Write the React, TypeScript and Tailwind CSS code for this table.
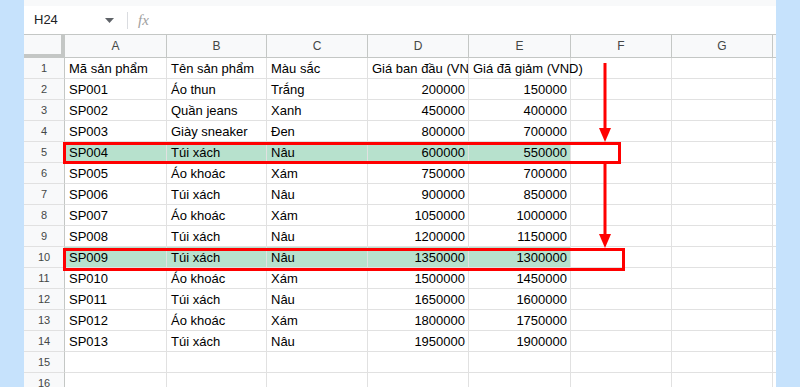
import React from "react";

type Row = { n: number; cells: string[]; hl?: boolean };

const rows: Row[] = [
  { n: 1, cells: ["Mã sản phẩm", "Tên sản phẩm", "Màu sắc", "Giá ban đầu (VND)", "Giá đã giảm (VND)"] },
  { n: 2, cells: ["SP001", "Áo thun", "Trắng", "200000", "150000"] },
  { n: 3, cells: ["SP002", "Quần jeans", "Xanh", "450000", "400000"] },
  { n: 4, cells: ["SP003", "Giày sneaker", "Đen", "800000", "700000"] },
  { n: 5, cells: ["SP004", "Túi xách", "Nâu", "600000", "550000"], hl: true },
  { n: 6, cells: ["SP005", "Áo khoác", "Xám", "750000", "700000"] },
  { n: 7, cells: ["SP006", "Túi xách", "Nâu", "900000", "850000"] },
  { n: 8, cells: ["SP007", "Áo khoác", "Xám", "1050000", "1000000"] },
  { n: 9, cells: ["SP008", "Túi xách", "Nâu", "1200000", "1150000"] },
  { n: 10, cells: ["SP009", "Túi xách", "Nâu", "1350000", "1300000"], hl: true },
  { n: 11, cells: ["SP010", "Áo khoác", "Xám", "1500000", "1450000"] },
  { n: 12, cells: ["SP011", "Túi xách", "Nâu", "1650000", "1600000"] },
  { n: 13, cells: ["SP012", "Áo khoác", "Xám", "1800000", "1750000"] },
  { n: 14, cells: ["SP013", "Túi xách", "Nâu", "1950000", "1900000"] },
  { n: 15, cells: [] },
  { n: 16, cells: [] },
];

const cols = ["A", "B", "C", "D", "E", "F", "G"];

function Arrow({ height }: { height: number }) {
  // red down arrow, shaft + filled head
  return (
    <svg width="14" height={height} viewBox={`0 0 14 ${height}`}>
      <rect x="5.5" y="0" width="3" height={height - 13} fill="#ff0000" />
      <polygon points={`1,${height - 14} 13,${height - 14} 7,${height}`} fill="#ff0000" />
    </svg>
  );
}

export default function App() {
  return (
    <div className="w-[800px] h-[387px] overflow-hidden bg-[#c6e2fc] px-[24px] font-['Liberation_Sans',Arial,sans-serif] text-[13px] text-black">
      <div className="w-full h-full bg-white flex flex-col overflow-hidden">
        {/* toolbar edge */}
        <div className="h-[6px] bg-[#f8f9fa] shrink-0" />

        {/* name box + formula bar */}
        <div className="h-[28px] shrink-0 flex items-center">
          <div className="w-[103px] pl-[10px] flex items-center justify-between pr-[13px]">
            <span className="text-[13px] text-[#202124]">H24</span>
            <svg width="9" height="5" viewBox="0 0 9 5">
              <polygon points="0,0 9,0 4.5,5" fill="#5f6368" />
            </svg>
          </div>
          <div className="w-px h-[17px] bg-[#dadce0]" />
          <span className="ml-[10px] font-['Liberation_Serif',serif] italic text-[15px] text-[#a0a0a0]">fx</span>
        </div>

        {/* sheet */}
        <div className="relative flex-1">
          <div className="grid grid-cols-[41px_102px_100px_101px_101px_102px_101px_101px_1fr]">
            {/* column headers */}
            <div className="h-[24px] bg-[#f8f9fa] border-t border-[#c4c7c5] border-r-[4px] border-b-[4px] border-r-[#c4c7c5] border-b-[#c4c7c5]" />
            {cols.map((c) => (
              <div
                key={c}
                className="h-[24px] bg-[#f8f9fa] border-t border-b border-r border-[#c4c7c5] flex items-center justify-center text-[12px] text-[#444746]"
              >
                {c}
              </div>
            ))}
            <div className="h-[24px] bg-[#f8f9fa] border-t border-b border-[#c4c7c5]" />

            {rows.map((r) => (
              <React.Fragment key={r.n}>
                <div className="h-[21px] bg-[#f8f9fa] border-r border-b border-r-[#c4c7c5] border-b-[#e1e1e1] flex items-center justify-center text-[11px] text-[#444746]">
                  {r.n}
                </div>
                {cols.map((c, i) => {
                  const v = r.cells[i] ?? "";
                  const num = /^\d+$/.test(v);
                  const spill = r.n === 1 && i === 4;
                  return (
                    <div
                      key={c}
                      className={`h-[21px] border-r border-b border-[#e1e1e1] leading-[22px] whitespace-nowrap px-[4px] ${
                        num ? "text-right pr-[3px]" : ""
                      } ${spill ? "overflow-visible relative z-10" : "overflow-hidden"} ${
                        r.hl && i < 5 ? "bg-[#b7e1cd]" : ""
                      }`}
                    >
                      {v}
                    </div>
                  );
                })}
                <div className="h-[21px] border-b border-[#e1e1e1]" />
              </React.Fragment>
            ))}
          </div>

          {/* annotations */}
          <div className="absolute left-[39px] top-[108px] w-[558px] h-[22px] border-[3px] border-[#ff0000] z-20" />
          <div className="absolute left-[39px] top-[214px] w-[562px] h-[23px] border-[3px] border-[#ff0000] z-20" />
          <div className="absolute left-[574px] top-[29px] z-20">
            <Arrow height={79} />
          </div>
          <div className="absolute left-[574px] top-[130px] z-20">
            <Arrow height={84} />
          </div>
        </div>
      </div>
    </div>
  );
}
